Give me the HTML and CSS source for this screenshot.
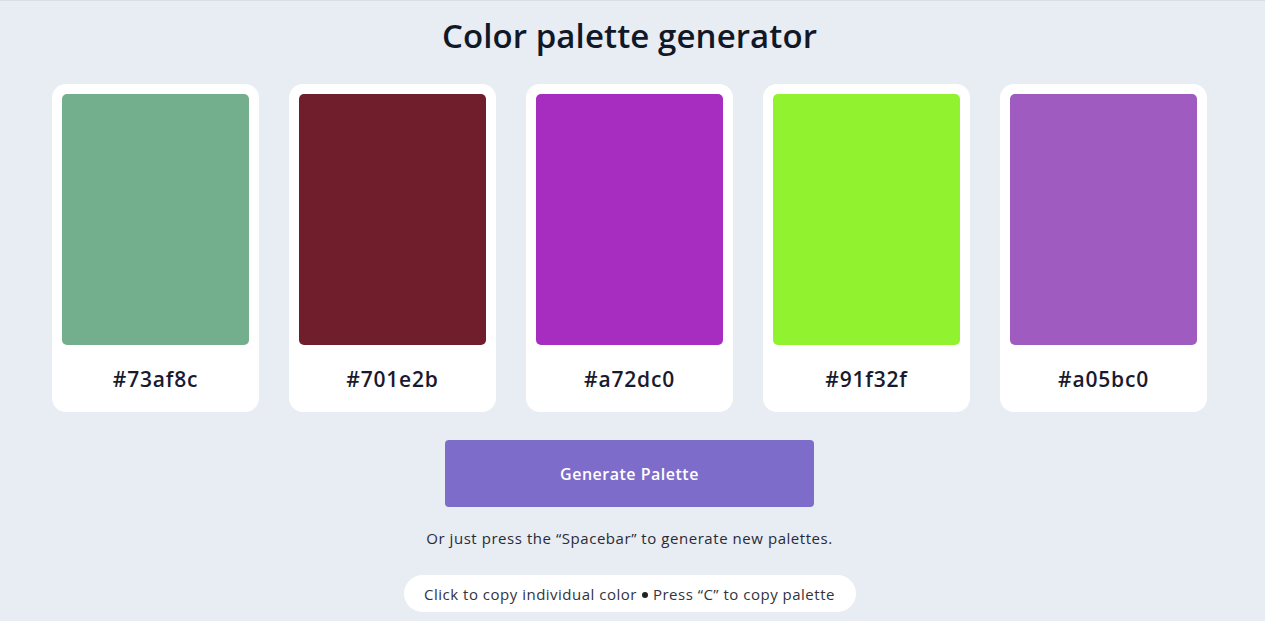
FILE: index.html
```html
<!DOCTYPE html>
<html lang="en">
<head>
<meta charset="utf-8">
<title>Color palette generator</title>
<link rel="stylesheet" href="styles.css">
</head>
<body>
<main class="page">
  <h1 class="title">Color palette generator</h1>
  <section class="palette">
    <div class="card"><div class="swatch" style="background:#73af8c"></div><p class="hex">#73af8c</p></div>
    <div class="card"><div class="swatch" style="background:#701e2b"></div><p class="hex">#701e2b</p></div>
    <div class="card"><div class="swatch" style="background:#a72dc0"></div><p class="hex">#a72dc0</p></div>
    <div class="card"><div class="swatch" style="background:#91f32f"></div><p class="hex">#91f32f</p></div>
    <div class="card"><div class="swatch" style="background:#a05bc0"></div><p class="hex">#a05bc0</p></div>
  </section>
  <button class="generate">Generate Palette</button>
  <p class="hint">Or just press the “Spacebar” to generate new palettes.</p>
  <p class="pill">Click to copy individual color <span class="dot"></span> Press “C” to copy palette</p>
</main>
</body>
</html>
```
FILE: styles.css
```css
* { box-sizing: border-box; }
html, body { margin: 0; padding: 0; }
body {
  background: #e8ecf3;
  border-top: 1px solid #d9dde8;
  font-family: "Open Sans", Lato, sans-serif;
  color: #0f172a;
  height: 621px;
  overflow: hidden;
}
.page {
  display: flex;
  flex-direction: column;
  align-items: center;
  padding-right: 6px;
}
.title {
  margin: 13px 0 0;
  font-size: 33px;
  line-height: 44px;
  font-weight: 600;
  color: #111827;
  letter-spacing: 0.1px;
}
.palette {
  display: flex;
  gap: 30px;
  margin-top: 26px;
}
.card {
  width: 207px;
  height: 328px;
  background: #fff;
  border-radius: 14px;
  padding: 10px;
  display: flex;
  flex-direction: column;
}
.swatch {
  height: 251px;
  border-radius: 5px;
}
.hex {
  margin: 0;
  flex: 1;
  display: flex;
  align-items: center;
  justify-content: center;
  font-size: 21px;
  font-weight: 600;
  letter-spacing: 0.8px;
  color: #1a1a2e;
  padding-top: 10px;
}
.generate {
  margin-top: 28px;
  width: 369px;
  height: 67px;
  border: 0;
  border-radius: 4px;
  background: #7e6cca;
  color: #fff;
  font-family: inherit;
  font-size: 16px;
  font-weight: 600;
  letter-spacing: 0.5px;
}
.hint {
  margin: 21px 0 0;
  font-size: 15px;
  line-height: 20px;
  letter-spacing: 0.55px;
  color: #2a2a35;
}
.pill {
  margin: 27px 0 0;
  width: 452px;
  height: 37px;
  border-radius: 19px;
  background: #fff;
  display: flex;
  align-items: center;
  justify-content: center;
  gap: 5px;
  font-size: 15px;
  letter-spacing: 0.5px;
  color: #333340;
}
.dot {
  width: 6px;
  height: 6px;
  border-radius: 50%;
  background: #222;
  margin-top: 3px;
}
```
